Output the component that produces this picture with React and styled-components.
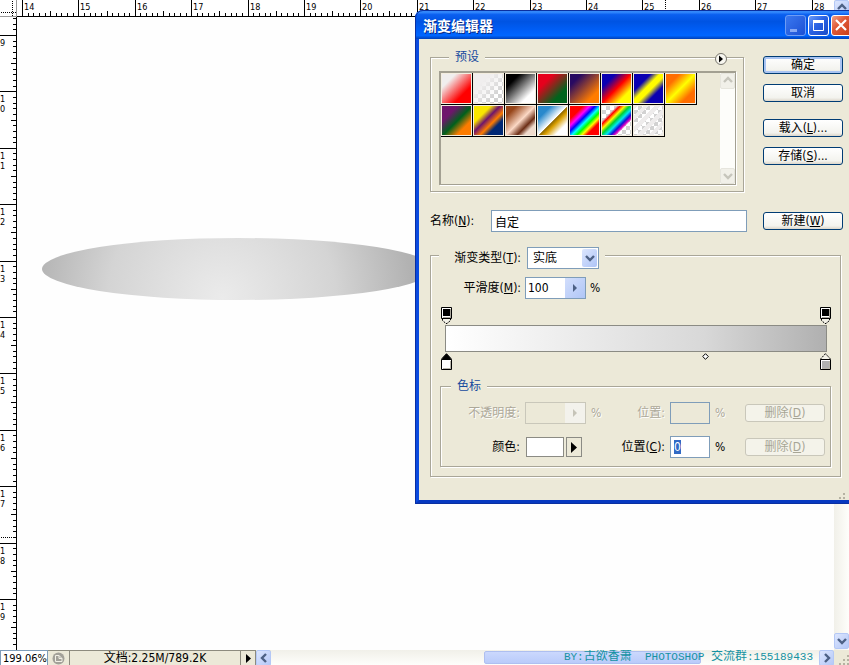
import React, { useEffect, useRef } from "react";
import styled, { createGlobalStyle } from "styled-components";

const GlobalStyle = createGlobalStyle`
  * {
    box-sizing: border-box;
  }

  body {
    margin: 0;
    background: #ffffff;
    color: #000000;
    overflow: hidden;
  }

  body, button, input, select {
    font-family: "DejaVu Sans Condensed", "Noto Sans CJK SC", sans-serif;
    font-size: 12px;
    line-height: 16px;
  }
`;

//workspace

const Workspace = styled.div`
  position: relative;
  display: grid;
  grid-template-columns: 17px minmax(0, 1fr) 15px;
  grid-template-rows: 17px minmax(0, 1fr) 15px;
  height: 100vh;
  overflow: hidden;
`;

const RulerCorner = styled.svg`
  width: 17px;
  height: 17px;
`;

const RulerTop = styled.svg`
  width: 100%;
  height: 17px;
  font-size: 9px;
`;

const RulerLeft = styled.svg`
  width: 17px;
  height: 100%;
  font-size: 9px;
`;

const Canvas = styled.main`
  background: #fefefe;
  padding: 221px 0 0 25px;
`;

const Ellipse = styled.svg`
  display: block;
  width: 392px;
  height: 62px;
`;

const VerticalScroll = styled.div`
  grid-column: 3;
  grid-row: 1 / 3;
  display: flex;
  flex-direction: column;
  justify-content: space-between;
  padding-bottom: 1px;
  background: linear-gradient(90deg, #f1f0e9, #fefefb);
`;

const ScrollButton = styled.button`
  display: flex;
  align-items: center;
  justify-content: center;
  flex: none;
  width: 15px;
  height: 16px;
  padding: 0;
  border: 1px solid ${(p) => (p.disabled ? "#e6e5dd" : "#b4c8f6")};
  border-radius: 2px;
  background: ${(p) => (p.disabled ? "#f1f0e9" : "linear-gradient(135deg, #dce6fe, #b4c8f8)")};
  color: ${(p) => (p.disabled ? "#c6c5bc" : "#4d6185")};
`;

//status bar

const StatusBar = styled.footer`
  position: relative;
  grid-column: 1 / 4;
  display: flex;
  overflow: hidden;
  background: #ece9d8;
`;

const ZoomInput = styled.input`
  width: 48px;
  height: 15px;
  padding: 1px 0 0 2px;
  border: 1px solid #7f9db9;
  border-bottom: 0;
  background: #ffffff;
  font-size: 11px;
`;

const StatusCell = styled.div`
  display: flex;
  align-items: center;
  justify-content: center;
  flex: none;
  width: ${(p) => p.$width};
  border-top: 1px solid #8d8b7e;
  border-right: 1px solid #8d8b7e;
`;

const StatusButton = styled.button`
  display: flex;
  align-items: center;
  justify-content: center;
  width: 15px;
  padding: 0;
  border: 1px solid #8d8b7e;
  border-width: 1px 1px 0 0;
  background: #ece9d8;
`;

const ScrollTrack = styled.div`
  flex: 1;
  display: flex;
  justify-content: center;
  padding-left: 94px;
  background: linear-gradient(#f1f0e9, #fefefb);
`;

const ScrollThumb = styled.div`
  width: 217px;
  margin: 1px 0;
  border: 1px solid #aebff0;
  border-radius: 2px;
  background: linear-gradient(#cbd8fd, #b9cbfa);
`;

const GripCorner = styled.div`
  display: flex;
  align-items: flex-end;
  justify-content: flex-end;
  width: 15px;
`;

const Credit = styled.p`
  position: absolute;
  right: 36px;
  top: 0;
  margin: 0;
  color: #1592a2;
  font-family: "Liberation Mono", "Noto Sans CJK SC", monospace;
  font-size: 11px;
  line-height: 15px;
  white-space: pre;
`;

const CreditCjk = styled.span`
  font-size: 12px;
`;

//dialog

const Dialog = styled.section`
  position: absolute;
  left: 415px;
  right: -8px;
  top: 10px;
  border: 4px solid #0a4be0;
  border-top: 0;
  border-color: #0a4be0 #0a4be0 #0638c0;
  border-radius: 8px 8px 0 0;
  outline: 1px solid #0a2fa0;
  outline-offset: -1px;
  background: #ece9d8;
`;

const TitleBar = styled.header`
  display: flex;
  align-items: center;
  gap: 2px;
  height: 29px;
  margin: 0 -4px;
  padding: 2px 5px 0 8px;
  border-radius: 8px 8px 0 0;
  background: linear-gradient(#0a58d8 0%, #3a90ff 6%, #0a5ff0 16%, #0054e3 40%, #0060fa 75%, #0066ff 88%, #0040b8 100%);
`;

const Title = styled.h1`
  flex: 1;
  margin: 0;
  color: #ffffff;
  font-size: 14px;
  line-height: 20px;
  font-weight: bold;
  text-shadow: 1px 1px 0 #0a2a80;
`;

const CaptionButton = styled.button`
  width: 21px;
  height: 21px;
  padding: 0;
  border: 1px solid ${(p) => (p.$faded ? "#6d9cf5" : "#ffffff")};
  border-radius: 3px;
  background: ${(p) =>
    p.$close
      ? "linear-gradient(135deg, #f0a088, #e05a38 40%, #c83c18)"
      : p.$faded
      ? "linear-gradient(135deg, #3a78f0, #1c50d4)"
      : "linear-gradient(135deg, #6d9cf8, #2a62e4 45%, #1a4cc8)"};

  svg {
    display: block;
  }
`;

const Body = styled.form`
  padding: 11px 10px 23px 11px;
`;

const TopArea = styled.div`
  display: flex;
  gap: 19px;
`;

const Group = styled.fieldset`
  position: relative;
  min-width: 0;
  margin: 0;
  padding: 0;
  border: 1px solid #a9a698;
  box-shadow: 1px 1px 0 #ffffff, inset 1px 1px 0 #ffffff;
`;

const Legend = styled.legend`
  margin-left: 10px;
  padding: 0 6px;
  background: #ece9d8;
  color: #164a9e;
  line-height: 14px;
`;

const PresetGroup = styled(Group)`
  flex: 1;
  padding: 7px 7px 6px 8px;
`;

const MenuButton = styled.button`
  position: absolute;
  right: 16px;
  top: -4px;
  width: 12px;
  height: 12px;
  margin-top: -7px;
  padding: 0;
  border: 0;
  background: none;

  svg {
    display: block;
  }
`;

const PresetList = styled.div`
  display: flex;
  justify-content: space-between;
  height: 114px;
  border: 1px solid #a3a092;
  border-width: 2px 1px 1px 2px;
  box-shadow: 1px 1px 0 #ffffff;
`;

const Swatches = styled.div`
  display: flex;
  flex-wrap: wrap;
  align-content: flex-start;
  width: 256px;
`;

const Swatch = styled.button`
  width: 32px;
  height: 32px;
  padding: 0;
  border: solid #000000;
  border-width: 0 1px 1px 0;
  box-shadow: inset 0 0 0 1px #f4eee0;
  background: ${(p) => p.$fill};
`;

const ListScroll = styled.div`
  display: flex;
  flex-direction: column;
  justify-content: space-between;
  width: 15px;
  background: #fdfdfa;
`;

const ButtonColumn = styled.div`
  display: flex;
  flex-direction: column;
  gap: 10px;
  width: 80px;
  padding-top: 6px;
`;

const PushButton = styled.button`
  width: 80px;
  height: 18px;
  margin-top: ${(p) => (p.$spaced ? "7px" : "0")};
  padding: 0;
  border: 1px solid #003c74;
  border-radius: 3px;
  background: linear-gradient(#ffffff, #f3f3ee 80%, #dcd6ca);
  box-shadow: ${(p) => (p.$primary ? "inset 0 0 0 2px #a9c4f2" : "none")};
  color: #000000;

  &:disabled {
    border-color: #c9c7ba;
    background: #f4f3ea;
    color: #a7a595;
  }
`;

const NameRow = styled.div`
  display: flex;
  align-items: center;
  gap: 16px;
  margin-top: 18px;
`;

const NameLabel = styled.label`
  width: 45px;
  white-space: nowrap;
`;

const TextInput = styled.input`
  flex: 1;
  min-width: 0;
  width: 100%;
  height: 22px;
  padding: 0 3px;
  border: 1px solid #7f9db9;
  border-radius: 0;
  outline: 0;
  background: #ffffff;

  &:disabled {
    background: #ece9d8;
  }

  &::selection {
    background: #316ac5;
    color: #ffffff;
  }
`;

const TypeGroup = styled(Group)`
  margin: 9px 2px 0 0;
  padding: 0 8px 9px;
`;

const TypeLegend = styled.legend`
  display: flex;
  align-items: center;
  gap: 6px;
  padding: 6px 6px 0 0;
  background: #ece9d8;
`;

const Label = styled.label`
  width: ${(p) => p.$width || "auto"};
  color: ${(p) => (p.$muted ? "#aca899" : "#000000")};
  text-shadow: ${(p) => (p.$muted ? "1px 1px 0 #ffffff" : "none")};
  text-align: right;
  white-space: nowrap;
`;

const FieldFrame = styled.div`
  display: flex;
  width: ${(p) => p.$width};
  height: 22px;
  border: 1px solid ${(p) => (p.$muted ? "#c9c7ba" : "#7f9db9")};
  background: ${(p) => (p.$muted ? "#ece9d8" : "#ffffff")};
`;

const TypeSelect = styled.select`
  flex: 1;
  min-width: 0;
  padding: 0 0 0 5px;
  border: 0;
  appearance: none;
  background: transparent;
  color: #000000;
`;

const SelectArrow = styled.span`
  display: flex;
  align-items: center;
  justify-content: center;
  width: 15px;
  margin: 1px;
  border-radius: 2px;
  background: linear-gradient(135deg, #dce6fe, #aec4f6);
  color: #4d6185;
  pointer-events: none;
`;

const FrameInput = styled.input`
  flex: 1;
  min-width: 0;
  padding: 0 0 0 2px;
  border: 0;
  background: transparent;
`;

const FrameButton = styled.button`
  display: flex;
  align-items: center;
  justify-content: center;
  width: 20px;
  padding: 0;
  border: 0;
  background: linear-gradient(135deg, #d2defc, #b0c6f6);
  color: #4d6185;

  &:disabled {
    background: #f3f2ec;
    color: #c6c4b8;
  }
`;

const SmoothRow = styled.div`
  display: flex;
  align-items: center;
  gap: 4px;
  margin-top: 8px;
`;

const StopRow = styled.div`
  display: flex;
  justify-content: space-between;
  position: relative;
  margin: ${(p) => (p.$above ? "8px 1px 1px 2px" : "1px 1px 0 2px")};
`;

const Stop = styled.button`
  padding: 0;
  border: 0;
  background: none;

  svg {
    display: block;
  }
`;

const Midpoint = styled.button`
  position: absolute;
  top: 0;
  padding: 0;
  border: 0;
  background: none;

  svg {
    display: block;
  }
`;

const GradientBar = styled.div`
  height: 27px;
  margin: 0 5px 0 6px;
  border: 1px solid #8b8b84;
  background: linear-gradient(90deg, #ffffff, #d8d8d8 68%, #b0b0b0);
`;

const StopGroup = styled(Group)`
  margin: 9px 1px 0 1px;
  padding: 9px 5px 8px 0;
`;

const StopFields = styled.div`
  display: grid;
  grid-template-columns: 79px 61px 14px minmax(0, 1fr) 40px 25px 80px;
  align-items: center;
  gap: 12px 5px;
`;

const Unit = styled.span`
  color: ${(p) => (p.$muted ? "#aca899" : "#000000")};
  text-shadow: ${(p) => (p.$muted ? "1px 1px 0 #ffffff" : "none")};
`;

const ColorField = styled.div`
  grid-column: span 2;
  display: flex;
  gap: 2px;
  padding-left: 1px;
`;

const ColorWell = styled.button`
  width: 38px;
  height: 20px;
  border: 1px solid #8b8b84;
  background: #ffffff;
`;

const ColorMenu = styled.button`
  display: flex;
  align-items: center;
  justify-content: center;
  width: 16px;
  height: 20px;
  padding: 0;
  border: 1px solid #8b8b84;
  background: #ece9d8;
`;

const ResizeGrip = styled.svg`
  position: absolute;
  right: 4px;
  bottom: 0;
`;

const rainbow = "#ff0000 24%, #ff00ff 35%, #0000ff 44%, #00ffff 53%, #00ff00 61%, #ffff00 69%, #ff0000 77%";
const checks = "repeating-conic-gradient(#d2d2d2 0 25%, #ffffff 0 50%) 1px 1px / 8px 8px";

const presets = [
  { name: "前景到背景", fill: "linear-gradient(135deg, #f0eeee 25%, #ff0000 70%)" },
  { name: "前景到透明", fill: `linear-gradient(135deg, #f0eeee 30%, #f0eeee00 75%), ${checks}` },
  { name: "黑色、白色", fill: "linear-gradient(135deg, #000000 25%, #ffffff 75%)" },
  { name: "红色、绿色", fill: "linear-gradient(135deg, #e6001c 28%, #00641c 72%)" },
  { name: "紫色、橙色", fill: "linear-gradient(135deg, #280a62 22%, #ff7c00 76%)" },
  { name: "蓝色、红色、黄色", fill: "linear-gradient(135deg, #0a00b2 25%, #ff0000 50%, #fffc00 75%)" },
  { name: "蓝色、黄色、蓝色", fill: "linear-gradient(135deg, #0a00b2 30%, #fffc00 45%, #fffc00 55%, #0a00b2 70%)" },
  { name: "橙色、黄色、橙色", fill: "linear-gradient(135deg, #ff6e02 25%, #ffff00 50%, #ff6d00 75%)" },
  { name: "紫色、绿色、橙色", fill: "linear-gradient(135deg, #6f156c 28%, #00601b 52%, #fd7c00 74%)" },
  { name: "黄色、紫色、橙色、蓝色", fill: "linear-gradient(135deg, #f9e600 30%, #6f156c 45%, #fd7c00 60%, #002874 72%)" },
  { name: "铜色", fill: "linear-gradient(135deg, #97461a 20%, #fbd8c5 50%, #6c2e16 68%, #efdbcd 80%)" },
  { name: "铬黄", fill: "linear-gradient(135deg, #2989cc 24%, #ffffff 50%, #906a00 52%, #d99f00 60%, #ffffff 78%)" },
  { name: "色谱", fill: `linear-gradient(135deg, ${rainbow})` },
  {
    name: "透明彩虹",
    fill: `linear-gradient(135deg, #ff000000 27%, #ff0000 32%, #fff800 40%, #00d030 48%, #00e8f0 56%, #1010d8 64%, #e000c0 70%, #ff00c000 74%), ${checks}`,
  },
  {
    name: "透明条纹",
    fill: `repeating-linear-gradient(135deg, #eeecec 0 4px, #eeecec00 4px 8px), ${checks}`,
  },
];

//ruler scale: 282 pixels cover five units
const tickAt = (start, n) => Math.round(start + (n * 282) / 50);

const tickLength = (n) => {
  if (n % 10 === 0) return 16;
  return n % 5 === 0 ? 5 : 3;
};

function HorizontalRuler({ start, first }) {
  const count = Math.ceil(window.innerWidth / 5);
  const ticks = Array.from({ length: count }, (_, i) => i).filter(
    (n) => tickAt(start, n) < window.innerWidth - 32
  );
  return (
    <RulerTop shapeRendering="crispEdges" aria-hidden="true">
      <rect x="0" y="16" width="100%" height="1" />
      {ticks.map((n) => (
        <rect key={n} x={tickAt(start, n)} y={16 - tickLength(n)} width="1" height={tickLength(n)} />
      ))}
      {ticks
        .filter((n) => n % 10 === 0)
        .map((n) => (
          <text key={n} x={tickAt(start, n) + 2} y="10">
            {first + n / 10}
          </text>
        ))}
      <path d="M648.5 0v16" stroke="#000" strokeDasharray="1 1" />
    </RulerTop>
  );
}

function VerticalRuler({ start, first }) {
  const height = window.innerHeight - 32;
  const ticks = Array.from({ length: Math.ceil(height / 5) }, (_, i) => i - 3).filter(
    (n) => tickAt(start, n) < height
  );
  return (
    <RulerLeft shapeRendering="crispEdges" aria-hidden="true">
      <rect x="16" y="0" width="1" height="100%" />
      {ticks.map((n) => (
        <rect key={n} x={16 - tickLength(n)} y={tickAt(start, n)} width={tickLength(n)} height="1" />
      ))}
      {ticks
        .filter((n) => n % 10 === 0)
        .map((n) =>
          String(first + n / 10)
            .split("")
            .map((digit, i) => (
              <text key={`${n}-${i}`} x="0" y={tickAt(start, n) + 11 + i * 10}>
                {digit}
              </text>
            ))
        )}
      <path d="M1 520.5h15" stroke="#000" strokeDasharray="1 1" />
    </RulerLeft>
  );
}

const chevrons = {
  up: "M1 6l4-4 4 4",
  down: "M1 3l4 4 4-4",
  left: "M7 1L3 5l4 4",
  right: "M3 1l4 4-4 4",
};

function Chevron({ dir }) {
  return (
    <svg width="10" height="10" viewBox="0 0 10 10" aria-hidden="true">
      <path d={chevrons[dir]} fill="none" stroke="currentColor" strokeWidth="2.4" />
    </svg>
  );
}

function Triangle({ width, height }) {
  return (
    <svg width={width} height={height} viewBox="0 0 5 10" preserveAspectRatio="none" aria-hidden="true">
      <path d="M0 0l5 5-5 5z" fill="currentColor" />
    </svg>
  );
}

function OpacityStop({ name }) {
  return (
    <Stop type="button" aria-label={name}>
      <svg width="11" height="17" viewBox="0 0 11 17">
        <path d="M1 11v2l4 4h1l4-4v-2z" fill="#f4f2e8" />
        <path d="M1.5 12v1.5l3.5 3h1l3.5-3V12" fill="none" stroke="#000" strokeDasharray="2 1" />
        <path d="M.5.5h10v11H.5z" fill="#fff" stroke="#000" />
        <path d="M2 10.5h8M9.5 2v9" stroke="#aaa79c" />
        <path d="M2 2h7v7H2z" />
      </svg>
    </Stop>
  );
}

function ColorStop({ name, color, active }) {
  return (
    <Stop type="button" aria-label={name}>
      <svg width="11" height="17" viewBox="0 0 11 17">
        <path
          d="M5.5.7L1 5.5V7h9V5.5z"
          fill={active ? "#000" : "#f4f2e8"}
          stroke="#000"
          strokeDasharray={active ? "none" : "2 1"}
        />
        <path d="M.5 6.5h10v10H.5z" fill="#fff" stroke="#000" />
        <path d="M2 15.5h8M9.5 8v8" stroke="#b8b5aa" />
        <path d="M2 8h7v7H2z" fill={color} />
      </svg>
    </Stop>
  );
}

function GradientEditor() {
  const position = useRef(null);

  useEffect(() => {
    position.current.focus();
    position.current.select();
  }, []);

  return (
    <Dialog role="dialog" aria-labelledby="title">
      <TitleBar>
        <Title id="title">渐变编辑器</Title>
        <CaptionButton type="button" $faded aria-label="最小化">
          <svg width="19" height="19">
            <path d="M4 13h7v3H4z" fill="#86a8f4" />
          </svg>
        </CaptionButton>
        <CaptionButton type="button" aria-label="最大化">
          <svg width="19" height="19">
            <path d="M4.5 5.5h10v9h-10z" fill="none" stroke="#fff" />
            <path d="M4 4h11v3H4z" fill="#fff" />
          </svg>
        </CaptionButton>
        <CaptionButton type="button" $close aria-label="关闭">
          <svg width="19" height="19">
            <path d="M4 4l10 10M14 4L4 14" stroke="#fff" strokeWidth="2.2" />
          </svg>
        </CaptionButton>
      </TitleBar>

      <Body onSubmit={(e) => e.preventDefault()}>
        <TopArea>
          <PresetGroup>
            <Legend>预设</Legend>
            <MenuButton type="button" aria-label="预设菜单">
              <svg width="12" height="12" viewBox="0 0 12 12">
                <circle cx="6" cy="6" r="5.5" fill="#f8f7f0" stroke="#77756c" />
                <path d="M4 2.5L8 6 4 9.5z" />
              </svg>
            </MenuButton>
            <PresetList>
              <Swatches>
                {presets.map((p) => (
                  <Swatch key={p.name} type="button" aria-label={p.name} $fill={p.fill} />
                ))}
              </Swatches>
              <ListScroll>
                <ScrollButton type="button" disabled aria-label="向上">
                  <Chevron dir="up" />
                </ScrollButton>
                <ScrollButton type="button" disabled aria-label="向下">
                  <Chevron dir="down" />
                </ScrollButton>
              </ListScroll>
            </PresetList>
          </PresetGroup>

          <ButtonColumn>
            <PushButton $primary>确定</PushButton>
            <PushButton type="button">取消</PushButton>
            <PushButton type="button" $spaced>载入(<u>L</u>)...</PushButton>
            <PushButton type="button">存储(<u>S</u>)...</PushButton>
          </ButtonColumn>
        </TopArea>

        <NameRow>
          <NameLabel htmlFor="name">名称(<u>N</u>):</NameLabel>
          <TextInput id="name" defaultValue="自定" />
          <PushButton type="button">新建(<u>W</u>)</PushButton>
        </NameRow>

        <TypeGroup>
          <TypeLegend>
            <Label $width="82px" htmlFor="type">渐变类型(<u>T</u>):</Label>
            <FieldFrame $width="72px">
              <TypeSelect id="type" defaultValue="solid">
                <option value="solid">实底</option>
                <option value="noise">杂色</option>
              </TypeSelect>
              <SelectArrow>
                <Chevron dir="down" />
              </SelectArrow>
            </FieldFrame>
          </TypeLegend>

          <SmoothRow>
            <Label $width="82px" htmlFor="smooth">平滑度(<u>M</u>):</Label>
            <FieldFrame $width="61px">
              <FrameInput id="smooth" defaultValue="100" />
              <FrameButton type="button" aria-label="调整平滑度">
                <Triangle width="4" height="8" />
              </FrameButton>
            </FieldFrame>
            <Unit>%</Unit>
          </SmoothRow>

          <StopRow $above>
            <OpacityStop name="起点不透明度" />
            <OpacityStop name="终点不透明度" />
          </StopRow>
          <GradientBar />
          <StopRow>
            <ColorStop name="起点颜色" color="#ffffff" active />
            <Midpoint type="button" aria-label="中点" style={{ left: "67%" }}>
              <svg width="7" height="7">
                <path d="M3.5.7L6.3 3.5 3.5 6.3.7 3.5z" fill="#fff" stroke="#000" />
              </svg>
            </Midpoint>
            <ColorStop name="终点颜色" color="#b0b0b0" />
          </StopRow>

          <StopGroup>
            <Legend>色标</Legend>
            <StopFields>
              <Label $muted htmlFor="opacity">不透明度:</Label>
              <FieldFrame $width="61px" $muted>
                <FrameInput id="opacity" disabled />
                <FrameButton type="button" disabled aria-label="调整不透明度">
                  <Triangle width="4" height="8" />
                </FrameButton>
              </FieldFrame>
              <Unit $muted>%</Unit>
              <Label $muted htmlFor="opacityPosition">位置:</Label>
              <TextInput id="opacityPosition" disabled />
              <Unit $muted>%</Unit>
              <PushButton type="button" disabled>删除(<u>D</u>)</PushButton>

              <Label htmlFor="color">颜色:</Label>
              <ColorField>
                <ColorWell id="color" type="button" />
                <ColorMenu type="button" aria-label="颜色菜单">
                  <Triangle width="6" height="11" />
                </ColorMenu>
              </ColorField>
              <Label htmlFor="position">位置(<u>C</u>):</Label>
              <TextInput id="position" ref={position} defaultValue="0" />
              <Unit>%</Unit>
              <PushButton type="button" disabled>删除(<u>D</u>)</PushButton>
            </StopFields>
          </StopGroup>
        </TypeGroup>
      </Body>
      <ResizeGrip width="10" height="10" aria-hidden="true">
        <path d="M0 7h2v2H0zM4 7h2v2H4zM4 3h2v2H4z" fill="#b5b2a2" />
      </ResizeGrip>
    </Dialog>
  );
}

export default function App() {
  return (
    <>
      <GlobalStyle />
      <Workspace>
        <RulerCorner shapeRendering="crispEdges" aria-hidden="true">
          <path d="M0 16.5h17M16.5 0v17" stroke="#9a9a9a" />
          <path d="M1 12.5h15M12.5 1v15" stroke="#000" strokeDasharray="1 1" />
        </RulerCorner>
        <HorizontalRuler start={5} first={14} />
        <VerticalScroll>
          <ScrollButton type="button" aria-label="向上滚动">
            <Chevron dir="up" />
          </ScrollButton>
          <ScrollButton type="button" aria-label="向下滚动">
            <Chevron dir="down" />
          </ScrollButton>
        </VerticalScroll>

        <VerticalRuler start={18} first={9} />
        <Canvas>
          <Ellipse viewBox="0 0 392 62" aria-label="渐变椭圆">
            <defs>
              <radialGradient id="shade" gradientUnits="userSpaceOnUse" cx="180" cy="60" r="190">
                <stop offset="0" stopColor="#ebebeb" />
                <stop offset="0.6" stopColor="#d4d4d4" />
                <stop offset="1" stopColor="#b2b2b2" />
              </radialGradient>
            </defs>
            <ellipse cx="196" cy="31" rx="196" ry="31" fill="url(#shade)" />
          </Ellipse>
        </Canvas>

        <StatusBar>
          <ZoomInput aria-label="缩放" defaultValue="199.06%" />
          <StatusCell $width="22px">
            <svg width="13" height="13" viewBox="0 0 13 13" aria-hidden="true">
              <circle cx="6.5" cy="6.5" r="6" fill="#a3a199" />
              <path d="M3.5 3.5h3.5v3h3v3H3.5zM7 3.5l3 3" fill="none" stroke="#f2f0e6" />
            </svg>
          </StatusCell>
          <StatusCell $width="171px">文档:2.25M/789.2K</StatusCell>
          <StatusButton type="button" aria-label="状态菜单">
            <Triangle width="5" height="9" />
          </StatusButton>
          <ScrollButton type="button" aria-label="向左滚动">
            <Chevron dir="left" />
          </ScrollButton>
          <ScrollTrack>
            <ScrollThumb />
          </ScrollTrack>
          <ScrollButton type="button" aria-label="向右滚动">
            <Chevron dir="right" />
          </ScrollButton>
          <GripCorner>
            <svg width="10" height="10" aria-hidden="true">
              <path d="M0 8h2v2H0zM4 8h2v2H4zM8 8h2v2H8zM4 4h2v2H4zM8 4h2v2H8zM8 0h2v2H8z" fill="#b5b2a2" />
            </svg>
          </GripCorner>
          <Credit>
            BY:<CreditCjk>古欲香萧</CreditCjk>{"  PHOTOSHOP "}
            <CreditCjk>交流群</CreditCjk>:155189433
          </Credit>
        </StatusBar>

        <GradientEditor />
      </Workspace>
    </>
  );
}
